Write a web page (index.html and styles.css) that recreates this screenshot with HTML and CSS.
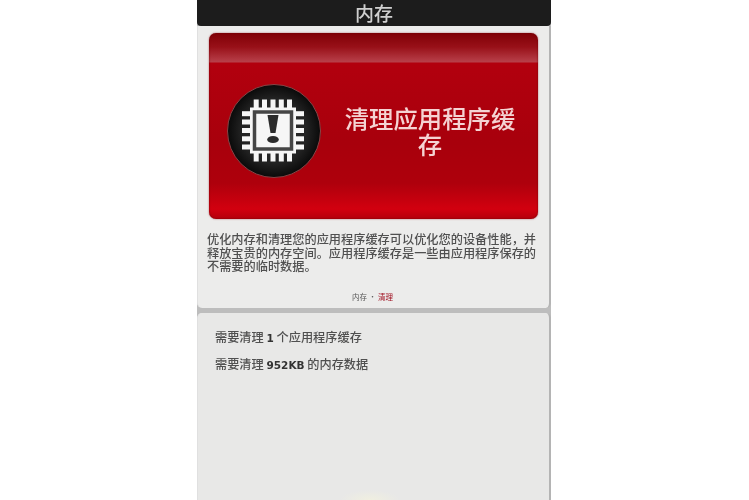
FILE: index.html
```html
<!DOCTYPE html>
<html lang="zh">
<head>
  <meta charset="utf-8">
  <title>内存</title>
  <link rel="stylesheet" href="styles.css">
</head>
<body>
  <div class="phone">
    <div class="header">内存</div>
    <div class="panel top-panel">
      <div class="red-card">
        <svg class="chip-icon" width="96" height="96" viewBox="0 0 96 96">
          <defs>
            <radialGradient id="ball" cx="50%" cy="50%" r="50%">
              <stop offset="0" stop-color="#333333"/>
              <stop offset="0.7" stop-color="#222222"/>
              <stop offset="1" stop-color="#0a0a0a"/>
            </radialGradient>
          </defs>
          <circle cx="48" cy="48" r="46.5" fill="url(#ball)" stroke="#8a4446" stroke-width="1"/>
          <g fill="#f6f6f6">
            <rect x="27.7" y="16.5" width="5" height="62"/>
            <rect x="36" y="16.5" width="5" height="62"/>
            <rect x="44.5" y="16.5" width="5" height="62"/>
            <rect x="52.8" y="16.5" width="5" height="62"/>
            <rect x="61" y="16.5" width="5" height="62"/>
            <rect x="16" y="28.2" width="62" height="5"/>
            <rect x="16" y="36.5" width="62" height="5"/>
            <rect x="16" y="45" width="62" height="5"/>
            <rect x="16" y="53.3" width="62" height="5"/>
            <rect x="16" y="61.5" width="62" height="5"/>
            <rect x="24" y="24.5" width="46" height="46"/>
          </g>
          <rect x="28.5" y="29" width="37" height="37" fill="#f6f6f6" stroke="#454545" stroke-width="3.5"/>
          <path d="M41.5 32 H52.5 L49.5 50 H44.5 Z" fill="#2b2b2b"/>
          <ellipse cx="47" cy="56.5" rx="5.8" ry="3.6" fill="#2b2b2b"/>
        </svg>
        <div class="card-title">清理应用程序缓存</div>
      </div>
      <p class="description">优化内存和清理您的应用程序缓存可以优化您的设备性能，并释放宝贵的内存空间。应用程序缓存是一些由应用程序保存的不需要的临时数据。</p>
      <div class="crumbs">内存 · <span class="crumb-red">清理</span></div>
    </div>
    <div class="panel bottom-panel">
      <p class="stat">需要清理 <b>1</b> 个应用程序缓存</p>
      <p class="stat">需要清理 <b>952KB</b> 的内存数据</p>
    </div>
  </div>
</body>
</html>
```

FILE: styles.css
```css
body {
  margin: 0;
  padding: 0 0 0 197px;
  height: 500px;
  overflow: hidden;
  background-color: #ffffff;
  font-family: "Noto Sans CJK SC", "Liberation Sans", sans-serif;
}

.phone {
  width: 354px;
  height: 500px;
  display: flex;
  flex-direction: column;
  background-color: #bdbdbd;
}

.header {
  height: 26px;
  line-height: 25px;
  text-align: center;
  font-size: 19px;
  font-weight: 500;
  color: #cfcfcf;
  background-color: #1c1c1c;
  border-radius: 0 0 4px 4px;
  filter: blur(0.5px);
}

.panel {
  background-color: #e8e8e7;
  border-right: 2px solid #b4b4b4;
  border-left: 1px solid #e0e0e0;
}

.top-panel {
  height: 282px;
  box-sizing: border-box;
  padding: 7px 11px 0 9px;
  background-color: #ececeb;
  border-radius: 0 0 5px 5px;
}

.bottom-panel {
  flex: 1;
  margin-top: 5px;
  padding: 16px 0 0 17px;
  border-radius: 5px 5px 0 0;
  background-image: radial-gradient(ellipse 30px 10px at 172px 100%, #f0efe0, #e8e8e7);
}

.red-card {
  height: 186px;
  margin: 0 0 0 2px;
  box-sizing: border-box;
  padding: 10px 12px 0 17px;
  display: flex;
  align-items: center;
  gap: 12px;
  border-radius: 7px;
  box-shadow: 0 0 2px #b0606a, inset 0 0 2px #700006;
  background: linear-gradient(to bottom,
    #800006 0, #981018 14px, #b8404a 29px,
    #b2000e 30px, #a8000c 110px, #ae000c 150px, #d2000f 176px, #b4000c 186px);
  filter: blur(0.7px);
}

.chip-icon {
  flex: none;
}

.card-title {
  width: 192px;
  text-align: center;
  font-size: 24.4px;
  font-weight: 500;
  line-height: 26px;
  color: #f5d3d3;
}

.description {
  margin: 14px 0 0 0;
  font-size: 12.2px;
  line-height: 13.6px;
  font-weight: 500;
  color: #505050;
  filter: blur(0.7px);
}

.crumbs {
  margin-top: 18px;
  text-align: center;
  font-size: 7.5px;
  line-height: 10px;
  color: #555555;
  filter: blur(0.6px);
}

.crumb-red {
  color: #a01020;
}

.stat {
  margin: 0 0 10px 0;
  font-size: 12.2px;
  line-height: 16px;
  font-weight: 500;
  color: #505050;
  filter: blur(0.6px);
}

.stat b {
  font-family: "DejaVu Sans", sans-serif;
  font-size: 10.5px;
  color: #333333;
}
```
